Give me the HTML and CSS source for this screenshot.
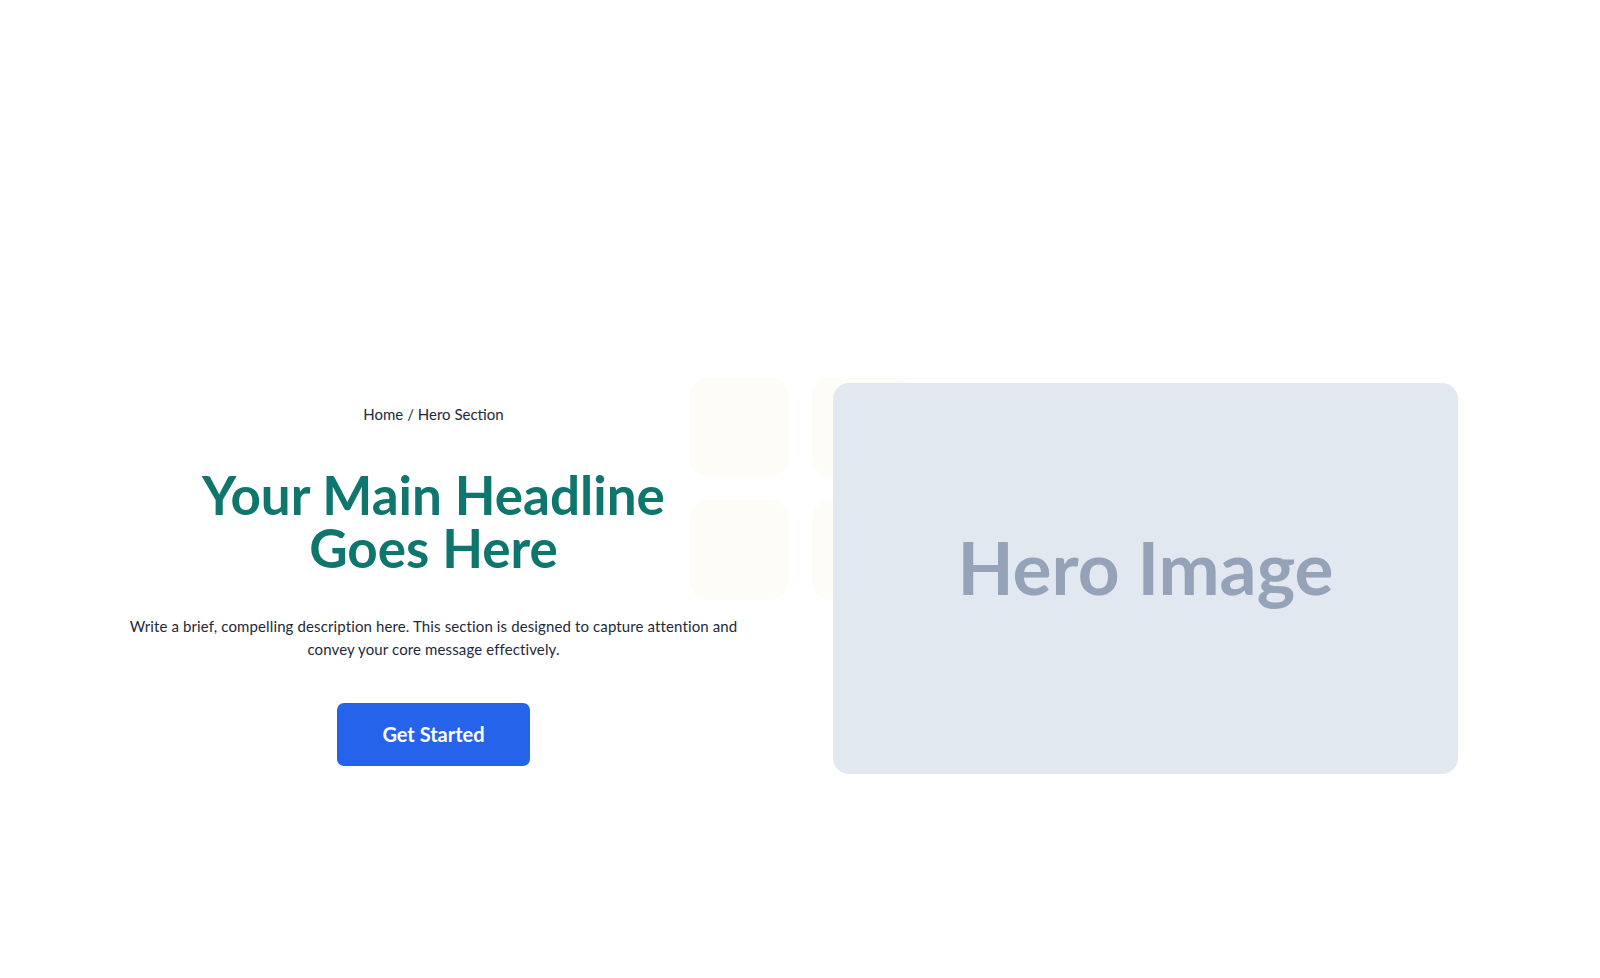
FILE: index.html
```html
<!DOCTYPE html>
<html lang="en">
<head>
  <meta charset="UTF-8" />
  <meta name="viewport" content="width=device-width, initial-scale=1.0"/>
  <title>Hero Section</title>
  <link rel="stylesheet" href="styles.css">
</head>
<body>

  <section class="hero">
    <div class="hero-text">
      <p class="breadcrumb">Home / Hero Section</p>
      <h1>Your Main Headline Goes Here</h1>
      <p class="lead">Write a brief, compelling description here. This section is designed to capture attention and convey your core message effectively.</p>
      <a href="#" class="btn">Get Started</a>
    </div>

    <div class="hero-media">
      <!-- soft decorative tiles behind the image -->
      <div class="tiles">
        <span></span>
        <span></span>
        <span></span>
        <span></span>
      </div>
      <div class="hero-image">Hero Image</div>
    </div>
  </section>

</body>
</html>
```

FILE: styles.css
```css
body {
  margin: 0;
  font-family: Lato, "Open Sans", sans-serif;
  background-color: #ffffff;
  color: #1e293b;
}

.hero {
  display: grid;
  grid-template-columns: 1fr 1fr;
  gap: 87px;
  align-items: start;
  padding: 383px 142px 0 121px;
}

.hero-text {
  padding-top: 21px;
  text-align: center;
}

.breadcrumb {
  margin: 0 0 44px;
  font-size: 15px;
  line-height: 20px;
  color: #1e293b;
}

h1 {
  max-width: 520px;
  margin: 0 auto 41px;
  font-size: 53px;
  line-height: 53px;
  font-weight: 700;
  color: #0f766e;
}

.lead {
  margin: 0 0 43px;
  font-size: 15px;
  line-height: 22.5px;
  letter-spacing: 0.12px;
  color: #1f2937;
}

.btn {
  display: inline-block;
  padding: 20px 45px;
  font-size: 20px;
  line-height: 23px;
  font-weight: 700;
  color: #ffffff;
  background-color: #2563eb;
  border-radius: 7px;
  text-decoration: none;
}

.hero-media {
  position: relative;
}

.tiles {
  position: absolute;
  top: -6px;
  left: -144px;
  display: grid;
  grid-template-columns: 100px 100px;
  gap: 23px;
}

.tiles span {
  display: block;
  width: 100px;
  height: 100px;
  border-radius: 20px;
  background-color: #fdfcf6;
}

.hero-image {
  position: relative;
  display: flex;
  align-items: center;
  justify-content: center;
  box-sizing: border-box;
  padding-bottom: 22px;
  aspect-ratio: 16 / 10;
  border-radius: 16px;
  background-color: #e2e8f0;
  color: #94a3b8;
  font-size: 73px;
  font-weight: 700;
}
```
